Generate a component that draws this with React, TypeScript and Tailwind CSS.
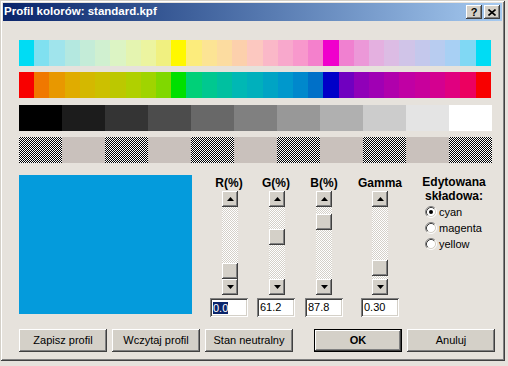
const row1 = [
  '#00dcf4', '#80e0f0', '#a0e4ec', '#b4e8e0', '#c4ecd8', '#d0f0d0', '#dcf4c4', '#e4f4b0', '#ecf4a0', '#f0f080',
  '#fff800', '#fcec7c', '#fce494', '#fcdca0', '#fcd0ac', '#fcc8c0', '#fab8c8', '#f8a8cc', '#f898cc', '#f480cc',
  '#f000cc', '#f080d0', '#ec98d8', '#e4b0e0', '#dcbce4', '#d0c4e8', '#c4c8ec', '#b8ccf0', '#a8d0f4', '#80d8f4',
  '#00dcf4',
];

const row2 = [
  '#f80000', '#f07800', '#e89800', '#e0ac00', '#d4b800', '#ccc000', '#bcc800', '#b0d000', '#a0d400', '#80d800',
  '#00e000', '#00d078', '#00c890', '#00c0a0', '#00b8b4', '#00b0bc', '#00a4c4', '#0098cc', '#0088cc', '#0070c8',
  '#0000c8', '#7000c0', '#9000b8', '#a000b4', '#b000ac', '#c000a4', '#c8009c', '#d40090', '#e00080', '#ec0060',
  '#f80000',
];

const grays = ['#000000', '#1c1c1c', '#343434', '#4c4c4c', '#686868', '#808080', '#989898', '#b0b0b0', '#cccccc', '#e4e4e4', '#ffffff'];

const raised =
  'bg-[#d4d0c8] shadow-[inset_-1px_-1px_#404040,inset_1px_1px_#ffffff,inset_-2px_-2px_#808080,inset_2px_2px_#d4d0c8]';
const sunken =
  'bg-white shadow-[inset_1px_1px_#808080,inset_-1px_-1px_#ffffff,inset_2px_2px_#404040,inset_-2px_-2px_#d4d0c8]';
const checker = 'bg-[image:repeating-conic-gradient(#000000_0_25%,#ffffff_0_50%)] bg-[length:2px_2px]';
const track = 'bg-[image:repeating-conic-gradient(#d4d0c8_0_25%,#ffffff_0_50%)] bg-[length:2px_2px]';

function Arrow({ dir }: { dir: 'up' | 'down' }) {
  return (
    <div className={`${raised} flex h-[16px] w-[16px] items-center justify-center`}>
      <svg width="7" height="4" viewBox="0 0 7 4">
        {dir === 'up' ? <path d="M3.5 0L7 4H0z" fill="#000" /> : <path d="M0 0h7L3.5 4z" fill="#000" />}
      </svg>
    </div>
  );
}

function Slider({ label, value, thumb, selected, shift }: { label: string; value: string; thumb: number; selected?: boolean; shift: number }) {
  return (
    <div className="flex w-[38px] flex-col">
      <div className="flex h-[16px] items-center justify-center whitespace-nowrap text-[12px] font-bold leading-[14px]">
        {label}
      </div>
      <div className="flex h-[104px] w-[16px] flex-col" style={{ marginLeft: shift }}>
        <Arrow dir="up" />
        <div className={`${track} flex h-[72px] flex-col`}>
          <div className={`${raised} h-[16px] w-[16px] shrink-0`} style={{ marginTop: thumb }} />
        </div>
        <Arrow dir="down" />
      </div>
      <div className={`${sunken} mt-[3px] flex h-[19px] items-center pl-[3px] text-[11px]`}>
        {selected ? (
          <span className="bg-[#0a246a] leading-[12px] text-white">{value}</span>
        ) : (
          <span>{value}</span>
        )}
      </div>
    </div>
  );
}

function Radio({ label, checked }: { label: string; checked?: boolean }) {
  return (
    <div className="flex h-[16px] items-center gap-[2px]">
      <svg width="12" height="12" viewBox="0 0 12 12">
        <circle cx="6" cy="6" r="4.5" fill="#ffffff" />
        <path d="M2.11 9.89A5.5 5.5 0 0 1 9.89 2.11" stroke="#808080" fill="none" />
        <path d="M9.89 2.11A5.5 5.5 0 0 1 2.11 9.89" stroke="#ffffff" fill="none" />
        <path d="M2.82 9.18A4.5 4.5 0 0 1 9.18 2.82" stroke="#404040" fill="none" />
        <path d="M9.18 2.82A4.5 4.5 0 0 1 2.82 9.18" stroke="#d4d0c8" fill="none" />
        {checked && <circle cx="6" cy="6" r="2" fill="#000" />}
      </svg>
      <span className="text-[11px]">{label}</span>
    </div>
  );
}

function Button({ children, primary }: { children: string; primary?: boolean }) {
  if (primary) {
    return (
      <div className="ml-[16px] h-[23px] w-[88px] border border-black">
        <div className={`${raised} flex h-full w-full items-center justify-center text-[11px] font-bold`}>{children}</div>
      </div>
    );
  }
  return (
    <div className={`${raised} flex h-[23px] w-[88px] items-center justify-center text-[11px]`}>{children}</div>
  );
}

export default function App() {
  return (
    <div className="h-[366px] w-[508px] bg-[#e6e2dc] font-['Liberation_Sans',Arial,sans-serif] text-black">
      <div className="flex h-[361px] w-[505px] flex-col bg-[#e6e2dc] p-[3px] shadow-[inset_1px_1px_#d4d0c8,inset_-1px_-1px_#404040,inset_2px_2px_#ffffff,inset_-2px_-2px_#808080]">
        {/* title bar */}
        <div className="flex h-[18px] items-center bg-linear-to-r from-[#0a246a] to-[#a6caf0] pl-[1px] pr-[2px]">
          <span className="flex-1 text-[11.5px] font-bold text-white">Profil kolorów: standard.kpf</span>
          <div className="flex gap-[2px]">
            <div className={`${raised} flex h-[14px] w-[16px] items-center justify-center text-[11px] font-bold leading-none`}>?</div>
            <div className={`${raised} flex h-[14px] w-[16px] items-center justify-center`}>
              <svg width="8" height="7" viewBox="0 0 8 7">
                <path d="M0.5 0.5L7.5 6.5M7.5 0.5L0.5 6.5" stroke="#000" strokeWidth="1.6" />
              </svg>
            </div>
          </div>
        </div>

        <div className="flex flex-col pl-[16px] pt-[19px]">
          <div className="flex h-[26px] w-[472px]">
            {row1.map((c, i) => (
              <div key={i} className="flex-1" style={{ backgroundColor: c }} />
            ))}
          </div>
          <div className="mt-[6px] flex h-[26px] w-[472px]">
            {row2.map((c, i) => (
              <div key={i} className="flex-1" style={{ backgroundColor: c }} />
            ))}
          </div>
          <div className="mt-[7px] flex h-[26px] w-[473px]">
            {grays.map((c, i) => (
              <div key={i} className="flex-1" style={{ backgroundColor: c }} />
            ))}
          </div>
          <div className="mt-[6px] flex h-[26px] w-[473px]">
            {grays.map((_, i) => (
              <div key={i} className={i % 2 === 0 ? `flex-1 ${checker}` : 'flex-1 bg-[#c9c1bc]'} />
            ))}
          </div>

          {/* editor */}
          <div className="mt-[12px] flex items-start">
            <div className="h-[139px] w-[173px] bg-[#049bdc]" />
            <div className="ml-[18px] flex gap-[9px]">
              <Slider label="R(%)" value="0.0" thumb={56} selected shift={12} />
              <Slider label="G(%)" value="61.2" thumb={22} shift={12} />
              <div className="ml-[1px]">
                <Slider label="B(%)" value="87.8" thumb={7} shift={11} />
              </div>
            </div>
            <div className="ml-[18px]">
              <Slider label="Gamma" value="0.30" thumb={53} shift={11} />
            </div>
            <div className="ml-[16px] flex w-[78px] flex-col">
              <div className="text-center text-[12px] font-bold leading-[14px]">
                Edytowana
                <br />
                składowa:
              </div>
              <div className="mt-[1px] flex flex-col pl-[10px]">
                <Radio label="cyan" checked />
                <Radio label="magenta" />
                <Radio label="yellow" />
              </div>
            </div>
          </div>

          <div className="mt-[12px] flex gap-[5px]">
            <Button>Zapisz profil</Button>
            <Button>Wczytaj profil</Button>
            <Button>Stan neutralny</Button>
            <Button primary>OK</Button>
            <Button>Anuluj</Button>
          </div>
        </div>
      </div>
    </div>
  );
}
